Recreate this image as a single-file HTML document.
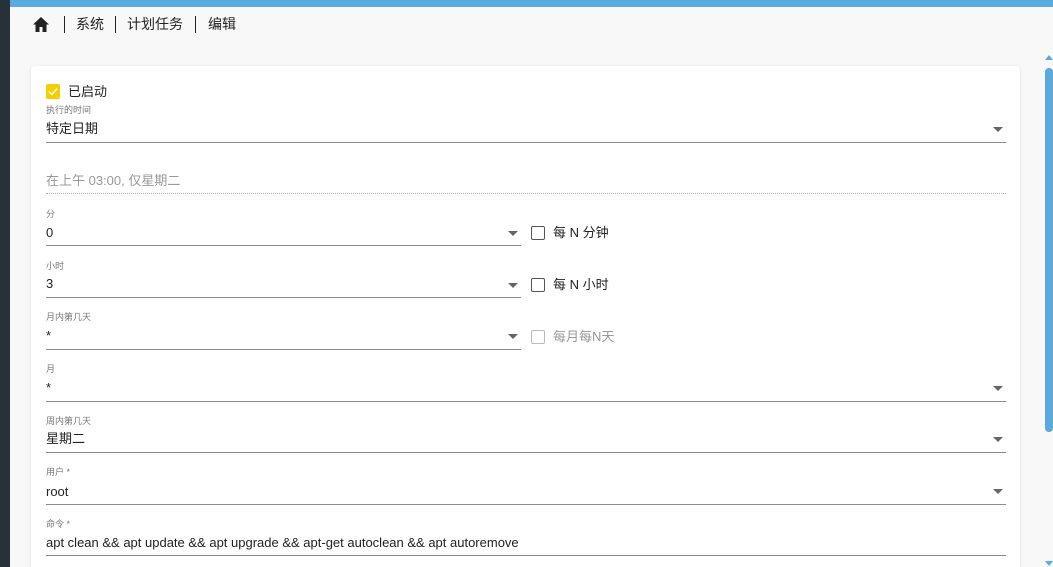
<!DOCTYPE html>
<html><head><meta charset="utf-8"><style>
*{margin:0;padding:0;box-sizing:border-box}
html{width:1053px;height:567px;overflow:hidden}
body{width:1053px;height:567px;overflow:hidden;background:#f8f8f8;font-family:"Liberation Sans","Noto Sans CJK SC",sans-serif;color:#222;position:relative;line-height:15px}
.a{position:absolute}
.side{left:0;top:0;width:10px;height:567px;background:#263238}
.top{left:10px;top:0;right:0;height:7px;background:#5aaadd}
.crumb{top:17px;font-size:14px;color:#222}
.sep{top:16px;width:1px;height:17px;background:#222}
.card{left:31px;top:66px;width:989px;height:520px;background:#fff;border-radius:4px;box-shadow:0 1px 3px rgba(0,0,0,.12)}
.lab{font-size:9px;color:#777;line-height:10px}
.val{font-size:13px;color:#222}
.line{height:1px;background:#8c8c8c}
.arr{width:0;height:0;border-left:5px solid transparent;border-right:5px solid transparent;border-top:5px solid #666}
.cb{width:14px;height:14px;border:1.5px solid #555;border-radius:2px}
.cbl{font-size:13px;color:#222}
</style></head><body>
<div class="a side"></div><div class="a top"></div>
<svg class="a" style="left:32px;top:16px" width="18" height="17" viewBox="0 0 18 17"><path d="M9 1 L1 8.5 H3.5 V16 H7.5 V11 H10.5 V16 H14.5 V8.5 H17 Z" fill="#222"/></svg>
<div class="a sep" style="left:64px"></div>
<div class="a crumb" style="left:76px">系统</div>
<div class="a sep" style="left:115px"></div>
<div class="a crumb" style="left:127px">计划任务</div>
<div class="a sep" style="left:195px"></div>
<div class="a crumb" style="left:208px">编辑</div>
<div class="a card"></div>
<div class="a" style="left:46px;top:84px;width:14px;height:15px;background:#f5cf00;border-radius:2px"><svg width="14" height="15"><path d="M3 7.5 L6 10.5 L11 4.5" stroke="#fff" stroke-width="1.4" fill="none"/></svg></div>
<div class="a val" style="left:68px;top:84px">已启动</div>
<div class="a lab" style="left:46px;top:105px">执行的时间</div>
<div class="a val" style="left:46px;top:121px">特定日期</div>
<div class="a arr" style="left:993px;top:127px"></div>
<div class="a line" style="left:46px;top:142px;width:960px"></div>
<div class="a val" style="left:46px;top:173px;color:#999">在上午 03:00, 仅星期二</div>
<div class="a" style="left:46px;top:193px;width:960px;border-top:1px dotted #aaa"></div>

<div class="a lab" style="left:46px;top:209px">分</div>
<div class="a val" style="left:46px;top:225px">0</div>
<div class="a arr" style="left:508px;top:231px"></div>
<div class="a line" style="left:46px;top:245px;width:475px"></div>
<div class="a cb" style="left:531px;top:226px"></div>
<div class="a cbl" style="left:553px;top:225px">每 N 分钟</div>

<div class="a lab" style="left:46px;top:261px">小时</div>
<div class="a val" style="left:46px;top:276px">3</div>
<div class="a arr" style="left:508px;top:283px"></div>
<div class="a line" style="left:46px;top:297px;width:475px"></div>
<div class="a cb" style="left:531px;top:278px"></div>
<div class="a cbl" style="left:553px;top:277px">每 N 小时</div>

<div class="a lab" style="left:46px;top:312px">月内第几天</div>
<div class="a val" style="left:46px;top:328px">*</div>
<div class="a arr" style="left:508px;top:334px"></div>
<div class="a line" style="left:46px;top:349px;width:475px"></div>
<div class="a cb" style="left:531px;top:330px;border-color:#bbb"></div>
<div class="a cbl" style="left:553px;top:329px;color:#999">每月每N天</div>

<div class="a lab" style="left:46px;top:364px">月</div>
<div class="a val" style="left:46px;top:380px">*</div>
<div class="a arr" style="left:993px;top:386px"></div>
<div class="a line" style="left:46px;top:401px;width:960px"></div>

<div class="a lab" style="left:46px;top:416px">周内第几天</div>
<div class="a val" style="left:46px;top:431px">星期二</div>
<div class="a arr" style="left:993px;top:437px"></div>
<div class="a line" style="left:46px;top:452px;width:960px"></div>

<div class="a lab" style="left:46px;top:467px">用户 *</div>
<div class="a val" style="left:46px;top:484px">root</div>
<div class="a arr" style="left:993px;top:489px"></div>
<div class="a line" style="left:46px;top:504px;width:960px"></div>

<div class="a lab" style="left:46px;top:519px">命令 *</div>
<div class="a val" style="left:46px;top:535px">apt clean &amp;&amp; apt update &amp;&amp; apt upgrade &amp;&amp; apt-get autoclean &amp;&amp; apt autoremove</div>
<div class="a line" style="left:46px;top:555px;width:960px"></div>

<div class="a" style="left:1045px;top:55px;width:0;height:0;border-left:4px solid transparent;border-right:4px solid transparent;border-bottom:5px solid #5aaadd"></div>
<div class="a" style="left:1045px;top:68px;width:8px;height:364px;background:#5aaadd;border-radius:4px"></div>
<div class="a" style="left:1045px;top:561px;width:0;height:0;border-left:4px solid transparent;border-right:4px solid transparent;border-top:5px solid #5aaadd"></div>
</body></html>
